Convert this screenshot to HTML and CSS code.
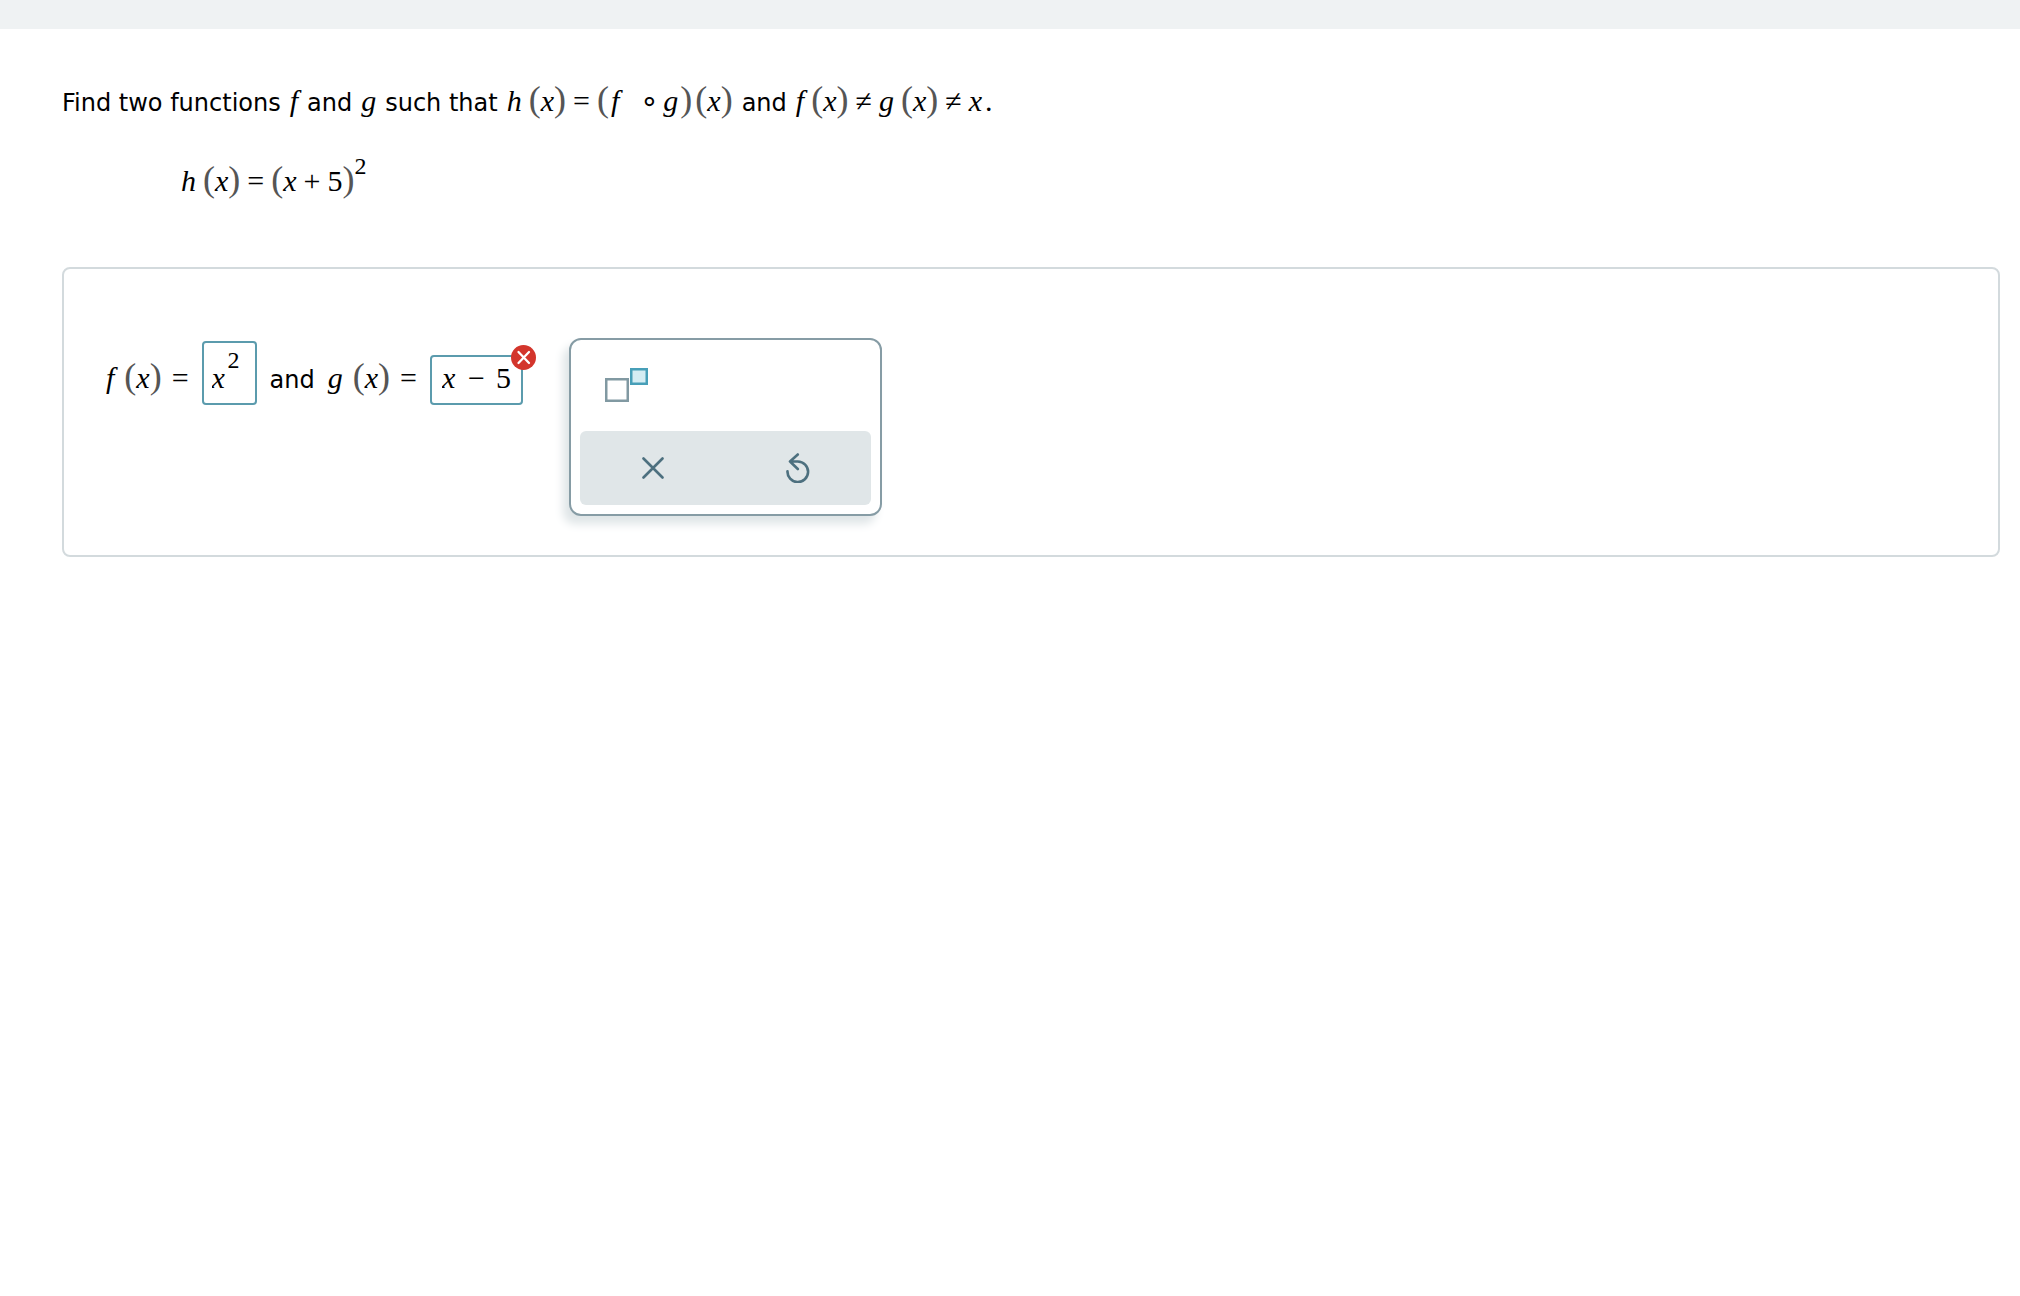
FILE: index.html
```html
<!DOCTYPE html>
<html lang="en">
<head>
<meta charset="utf-8">
<meta name="viewport" content="width=device-width, initial-scale=1">
<title>Function composition</title>
<link rel="stylesheet" href="styles.css">
</head>
<body>
<header class="topbar"></header>
<main class="page">
  <p class="question">
    <span>Find two functions</span>
    <i class="math">f</i>
    <span>and</span>
    <i class="math">g</i>
    <span>such that</span>
    <span class="math"><i>h</i><span class="group"><b>(</b><i>x</i><b>)</b></span><span>=</span><span class="product"><span class="group"><b>(</b><span class="compose"><i>f</i><span class="ring">∘</span><i>g</i></span><b>)</b></span><span class="group"><b>(</b><i>x</i><b>)</b></span></span></span>
    <span>and</span>
    <span class="math"><i>f</i><span class="group"><b>(</b><i>x</i><b>)</b></span><span>≠</span><i>g</i><span class="group"><b>(</b><i>x</i><b>)</b></span><span>≠</span><span class="product"><i>x</i><span>.</span></span></span>
  </p>
  <p class="equation math"><i>h</i><span class="group"><b>(</b><i>x</i><b>)</b></span><span>=</span><span class="group"><b>(</b><span class="math"><i>x</i><span>+</span><span>5</span></span><b>)</b><sup>2</sup></span></p>

  <section class="answer">
    <div class="expression">
      <span class="math lead"><i>f</i><span class="group"><b>(</b><i>x</i><b>)</b></span><span>=</span></span>
      <div class="field power">
        <input class="slot base" type="text" value="x" aria-label="f of x, base">
        <input class="slot exponent" type="text" value="2" aria-label="f of x, exponent">
      </div>
      <span>and</span>
      <span class="math lead"><i>g</i><span class="group"><b>(</b><i>x</i><b>)</b></span><span>=</span></span>
      <div class="field difference">
        <input class="slot base" type="text" value="x" aria-label="g of x, first term">
        <span>−</span>
        <input class="slot number" type="text" value="5" aria-label="g of x, second term">
        <svg class="badge" viewBox="0 0 25 25" role="img" aria-label="Incorrect"><circle cx="12.500" cy="12.500" r="12.500" fill="#d3352c"/><path d="M7.500 7l10.500 11M18 7L7.500 18" stroke="#fff" stroke-width="2.300" stroke-linecap="round"/></svg>
      </div>
    </div>

    <div class="palette">
      <div class="templates">
        <button class="template" type="button" aria-label="Exponent">
          <svg width="44" height="34" viewBox="0 0 44 34"><rect x="1.250" y="11.250" width="21.500" height="21.500" fill="#fff" stroke="#8199a2" stroke-width="2.500"/><rect x="26.250" y="1.250" width="15.500" height="14.500" fill="#d5edf3" stroke="#479fb8" stroke-width="2.500"/></svg>
        </button>
      </div>
      <div class="actions">
        <button class="action" type="button" aria-label="Clear">
          <svg width="22" height="22" viewBox="0 0 22 22"><path d="M1.500 1.500l19 19M20.500 1.500l-19 19"/></svg>
        </button>
        <button class="action" type="button" aria-label="Undo">
          <svg width="24" height="30" viewBox="0 0 24 30"><path d="M1.500 18.200A10.300 10.300 0 1 0 11.800 8.500H4M11.800 1.500L4 8.500l7.800 7.500"/></svg>
        </button>
      </div>
    </div>
  </section>
</main>
</body>
</html>
```
FILE: styles.css
```css
* { box-sizing: border-box; }

body {
  margin: 0;
  background: #fff;
  color: #000;
  font: 24px/40px "DejaVu Sans", Verdana, sans-serif;
}

.topbar {
  height: 29px;
  background: #eff2f3;
}

.page { padding: 50px 20px 40px 62px; }

.question,
.equation { margin: 0; }

.question {
  display: flex;
  flex-wrap: wrap;
  align-items: baseline;
  column-gap: 9px;
}

.equation { padding: 36px 0 0 119px; }

/* Mathematical notation */
.math {
  display: flex;
  align-items: baseline;
  gap: 7px;
  font-family: "Liberation Serif", "Times New Roman", serif;
  font-size: 30px;
}

.math b {
  color: #555;
  font-size: 36px;
  font-weight: normal;
}

.math sup {
  align-self: flex-start;
  font-size: 24px;
  line-height: 14px;
}

.group,
.product,
.compose {
  display: flex;
  align-items: baseline;
}

.product { gap: 3px; }

.compose {
  gap: 2px;
  padding: 0 2px;
}

.ring {
  width: 40px;
  padding-left: 16px;
  text-align: center;
  font-family: "DejaVu Sans", sans-serif;
}

/* Answer area */
.answer {
  display: flex;
  align-items: flex-start;
  gap: 46px;
  margin-top: 66px;
  padding: 69px 42px 39px;
  border: 2px solid #d3dadd;
  border-radius: 8px;
}

.expression {
  display: flex;
  align-items: baseline;
  gap: 13px;
  margin-top: 3px;
}

.lead { gap: 10px; }

.field {
  position: relative;
  display: flex;
  border: 2px solid #5b9bad;
  border-radius: 4px;
  font-family: "Liberation Serif", "Times New Roman", serif;
  font-size: 30px;
  line-height: 36px;
}

.power {
  align-items: flex-end;
  padding: 3px 12px 7px 8px;
}

.difference {
  align-items: baseline;
  gap: 11px;
  padding: 3px 10px 7px;
}

.slot {
  width: 15px;
  height: 36px;
  padding: 0;
  border: 0;
  outline: 0;
  background: none;
  color: inherit;
  font: inherit;
}

.base { font-style: italic; }

.exponent {
  height: 28px;
  margin: 0 0 22px 1px;
  font-size: 24px;
  line-height: 28px;
}

.badge {
  position: absolute;
  top: -12px;
  right: -15px;
  width: 25px;
  height: 25px;
}

/* Symbol palette */
.palette {
  width: 313px;
  padding: 0 9px 9px;
  border: 2px solid #869ca5;
  border-radius: 12px;
  background: #fff;
  box-shadow: -6px 8px 10px #dfe5e7;
}

.templates {
  height: 91px;
  padding: 28px 25px;
}

button {
  display: flex;
  align-items: center;
  justify-content: center;
  padding: 0;
  border: 0;
  background: none;
  cursor: pointer;
}

.actions {
  display: flex;
  height: 74px;
  border-radius: 6px;
  background: #e0e6e8;
}

.action { flex: 1; }

.action path {
  fill: none;
  stroke: #4d707f;
  stroke-width: 2.6;
  stroke-linecap: round;
  stroke-linejoin: round;
}
```
